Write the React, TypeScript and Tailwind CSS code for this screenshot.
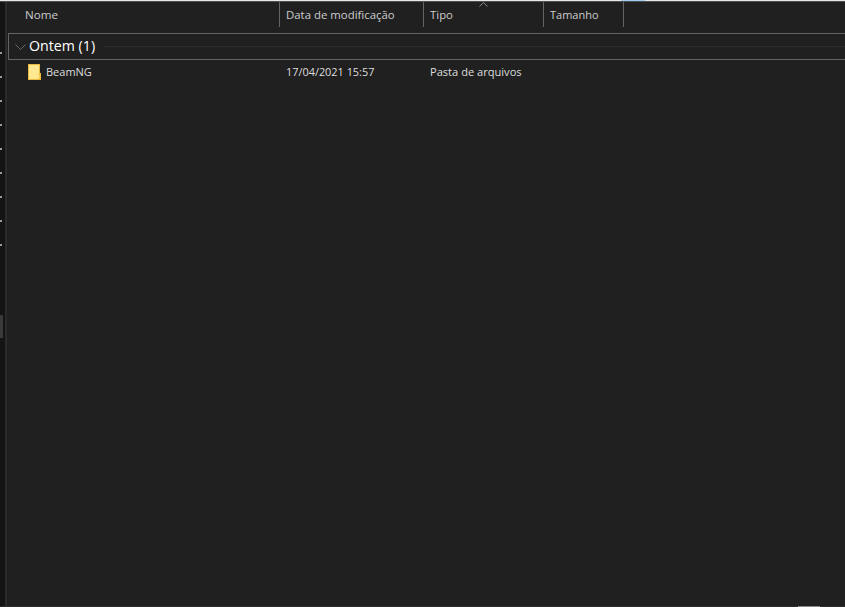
const uiFont = "font-['Open_Sans','Noto_Sans',sans-serif]";

const columns = [
  { label: "Nome", width: "w-[280px]", pad: "pl-[25px]", size: "text-[11.6px]" },
  { label: "Data de modificação", width: "w-[144px]", pad: "pl-[6px]", size: "text-[11.4px]" },
  { label: "Tipo", width: "w-[120px]", pad: "pl-[6px]", size: "text-[11.4px]" },
  { label: "Tamanho", width: "w-[80px]", pad: "pl-[6px]", size: "text-[11px]" },
];

const FolderIcon = () => (
  <svg width="13" height="16" viewBox="0 0 13 16" className="shrink-0">
    <path d="M0 0h12v9h1v7H0z" fill="#e8bb3c" />
    <path d="M1 1h10v14H1z" fill="#ffe88f" />
    <path d="M10 10h2v5h-2z" fill="#f3cb52" />
    <path d="M10 11h1v3h-1z" fill="#ffe88f" />
  </svg>
);

const SideDots = () => (
  <div className="flex w-[5px] flex-col items-start gap-[22px] bg-[#141414] pt-[51px]">
    {[0, 1, 2, 3, 4, 5, 6, 7, 8].map((i) => (
      <span key={i} className="h-[2px] w-[2px] bg-[#9a9a9a]" />
    ))}
  </div>
);

export default function App() {
  return (
    <div className={`relative flex h-[607px] w-[845px] flex-col overflow-hidden bg-[#202020] ${uiFont}`}>
      <div className="h-[1px] bg-[#e8e8e8]" />
      <div className="flex min-h-0 flex-1">
        <SideDots />
        <div className="w-[2px] bg-[#2b2b2b]" />
        <div className="min-w-0 flex-1">
          <div className="-ml-[7px] flex h-[26px] pt-[1px]">
            {columns.map((col) => (
              <div
                key={col.label}
                className={`flex items-center border-r border-[#636363] pt-[1px] text-[#cccccc] ${col.size} ${col.width} ${col.pad}`}
              >
                {col.label}
              </div>
            ))}
          </div>
          <div className="ml-[1px] mt-[6px] flex h-[27px] items-center border border-r-0 border-[#636363] pl-[6px]">
            <svg width="11" height="6" viewBox="0 0 11 6" fill="none" stroke="#6a6a6a">
              <path d="M0.5 0.5l5 5 5-5" />
            </svg>
            <span className="mb-[2px] ml-[3px] text-[14.2px] text-white">Ontem (1)</span>
            <div className="ml-[8px] h-[1px] flex-1 bg-[#2e2e2e]" />
          </div>
          <div className="-ml-[7px] flex h-[24px] items-center text-[11px] text-[#dedede]">
            <div className="flex w-[280px] items-center gap-[5px] pl-[28px]">
              <FolderIcon />
              <span>BeamNG</span>
            </div>
            <div className="w-[144px] pl-[6px] text-[10.9px]">17/04/2021 15:57</div>
            <div className="pl-[6px] text-[11.1px]">Pasta de arquivos</div>
          </div>
        </div>
      </div>
      <div className="absolute left-0 right-0 top-[1px] h-[1px] bg-[#4f4f4f]" />
      <svg width="9" height="5" viewBox="0 0 9 5" fill="none" stroke="#8a8a8a" className="absolute left-[479px] top-[2px]">
        <path d="M0.5 4.5l4-4 4 4" />
      </svg>
      <div className="absolute left-[621px] top-0 h-[1px] w-[24px] bg-[#9fcdf5]" />
      <div className="absolute left-0 top-[315px] h-[23px] w-[3px] bg-[#3a3a3a]" />
      <div className="absolute bottom-0 left-0 right-0 h-[1px] bg-[#2b2b2b]" />
      <div className="absolute bottom-0 left-[798px] h-[1px] w-[22px] bg-[#8a8a8a]" />
    </div>
  );
}
